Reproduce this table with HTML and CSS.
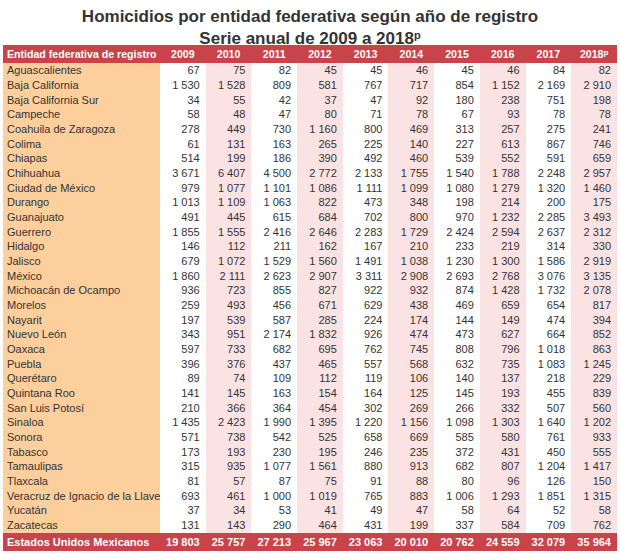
FILE: index.html
```html
<!DOCTYPE html>
<html lang="es">
<head>
    <meta charset="UTF-8">
    <title>Homicidios por entidad federativa</title>
    <link rel="stylesheet" href="styles.css">
</head>
<body>
    <!-- Título -->
    <div class="titulo">
        <div>Homicidios por entidad federativa según año de registro</div>
        <div>Serie anual de 2009 a 2018<sup>p</sup></div>
    </div>

    <!-- Tabla -->
    <table class="tabla">
        <colgroup>
            <col class="c-entidad">
            <col class="c-anio">
            <col class="c-anio alt">
            <col class="c-anio">
            <col class="c-anio alt">
            <col class="c-anio">
            <col class="c-anio alt">
            <col class="c-anio">
            <col class="c-anio alt">
            <col class="c-anio">
            <col class="c-anio alt">
        </colgroup>
        <thead>
            <tr class="encabezado">
                <th>Entidad federativa de registro</th>
                <th>2009</th><th>2010</th><th>2011</th><th>2012</th><th>2013</th>
                <th>2014</th><th>2015</th><th>2016</th><th>2017</th><th>2018<sup>p</sup></th>
            </tr>
        </thead>
        <tbody>
            <tr><td>Aguascalientes</td><td>67</td><td>75</td><td>82</td><td>45</td><td>45</td><td>46</td><td>45</td><td>46</td><td>84</td><td>82</td></tr>
            <tr><td>Baja California</td><td>1 530</td><td>1 528</td><td>809</td><td>581</td><td>767</td><td>717</td><td>854</td><td>1 152</td><td>2 169</td><td>2 910</td></tr>
            <tr><td>Baja California Sur</td><td>34</td><td>55</td><td>42</td><td>37</td><td>47</td><td>92</td><td>180</td><td>238</td><td>751</td><td>198</td></tr>
            <tr><td>Campeche</td><td>58</td><td>48</td><td>47</td><td>80</td><td>71</td><td>78</td><td>67</td><td>93</td><td>78</td><td>78</td></tr>
            <tr><td>Coahuila de Zaragoza</td><td>278</td><td>449</td><td>730</td><td>1 160</td><td>800</td><td>469</td><td>313</td><td>257</td><td>275</td><td>241</td></tr>
            <tr><td>Colima</td><td>61</td><td>131</td><td>163</td><td>265</td><td>225</td><td>140</td><td>227</td><td>613</td><td>867</td><td>746</td></tr>
            <tr><td>Chiapas</td><td>514</td><td>199</td><td>186</td><td>390</td><td>492</td><td>460</td><td>539</td><td>552</td><td>591</td><td>659</td></tr>
            <tr><td>Chihuahua</td><td>3 671</td><td>6 407</td><td>4 500</td><td>2 772</td><td>2 133</td><td>1 755</td><td>1 540</td><td>1 788</td><td>2 248</td><td>2 957</td></tr>
            <tr><td>Ciudad de México</td><td>979</td><td>1 077</td><td>1 101</td><td>1 086</td><td>1 111</td><td>1 099</td><td>1 080</td><td>1 279</td><td>1 320</td><td>1 460</td></tr>
            <tr><td>Durango</td><td>1 013</td><td>1 109</td><td>1 063</td><td>822</td><td>473</td><td>348</td><td>198</td><td>214</td><td>200</td><td>175</td></tr>
            <tr><td>Guanajuato</td><td>491</td><td>445</td><td>615</td><td>684</td><td>702</td><td>800</td><td>970</td><td>1 232</td><td>2 285</td><td>3 493</td></tr>
            <tr><td>Guerrero</td><td>1 855</td><td>1 555</td><td>2 416</td><td>2 646</td><td>2 283</td><td>1 729</td><td>2 424</td><td>2 594</td><td>2 637</td><td>2 312</td></tr>
            <tr><td>Hidalgo</td><td>146</td><td>112</td><td>211</td><td>162</td><td>167</td><td>210</td><td>233</td><td>219</td><td>314</td><td>330</td></tr>
            <tr><td>Jalisco</td><td>679</td><td>1 072</td><td>1 529</td><td>1 560</td><td>1 491</td><td>1 038</td><td>1 230</td><td>1 300</td><td>1 586</td><td>2 919</td></tr>
            <tr><td>México</td><td>1 860</td><td>2 111</td><td>2 623</td><td>2 907</td><td>3 311</td><td>2 908</td><td>2 693</td><td>2 768</td><td>3 076</td><td>3 135</td></tr>
            <tr><td>Michoacán de Ocampo</td><td>936</td><td>723</td><td>855</td><td>827</td><td>922</td><td>932</td><td>874</td><td>1 428</td><td>1 732</td><td>2 078</td></tr>
            <tr><td>Morelos</td><td>259</td><td>493</td><td>456</td><td>671</td><td>629</td><td>438</td><td>469</td><td>659</td><td>654</td><td>817</td></tr>
            <tr><td>Nayarit</td><td>197</td><td>539</td><td>587</td><td>285</td><td>224</td><td>174</td><td>144</td><td>149</td><td>474</td><td>394</td></tr>
            <tr><td>Nuevo León</td><td>343</td><td>951</td><td>2 174</td><td>1 832</td><td>926</td><td>474</td><td>473</td><td>627</td><td>664</td><td>852</td></tr>
            <tr><td>Oaxaca</td><td>597</td><td>733</td><td>682</td><td>695</td><td>762</td><td>745</td><td>808</td><td>796</td><td>1 018</td><td>863</td></tr>
            <tr><td>Puebla</td><td>396</td><td>376</td><td>437</td><td>465</td><td>557</td><td>568</td><td>632</td><td>735</td><td>1 083</td><td>1 245</td></tr>
            <tr><td>Querétaro</td><td>89</td><td>74</td><td>109</td><td>112</td><td>119</td><td>106</td><td>140</td><td>137</td><td>218</td><td>229</td></tr>
            <tr><td>Quintana Roo</td><td>141</td><td>145</td><td>163</td><td>154</td><td>164</td><td>125</td><td>145</td><td>193</td><td>455</td><td>839</td></tr>
            <tr><td>San Luis Potosí</td><td>210</td><td>366</td><td>364</td><td>454</td><td>302</td><td>269</td><td>266</td><td>332</td><td>507</td><td>560</td></tr>
            <tr><td>Sinaloa</td><td>1 435</td><td>2 423</td><td>1 990</td><td>1 395</td><td>1 220</td><td>1 156</td><td>1 098</td><td>1 303</td><td>1 640</td><td>1 202</td></tr>
            <tr><td>Sonora</td><td>571</td><td>738</td><td>542</td><td>525</td><td>658</td><td>669</td><td>585</td><td>580</td><td>761</td><td>933</td></tr>
            <tr><td>Tabasco</td><td>173</td><td>193</td><td>230</td><td>195</td><td>246</td><td>235</td><td>372</td><td>431</td><td>450</td><td>555</td></tr>
            <tr><td>Tamaulipas</td><td>315</td><td>935</td><td>1 077</td><td>1 561</td><td>880</td><td>913</td><td>682</td><td>807</td><td>1 204</td><td>1 417</td></tr>
            <tr><td>Tlaxcala</td><td>81</td><td>57</td><td>87</td><td>75</td><td>91</td><td>88</td><td>80</td><td>96</td><td>126</td><td>150</td></tr>
            <tr><td>Veracruz de Ignacio de la Llave</td><td>693</td><td>461</td><td>1 000</td><td>1 019</td><td>765</td><td>883</td><td>1 006</td><td>1 293</td><td>1 851</td><td>1 315</td></tr>
            <tr><td>Yucatán</td><td>37</td><td>34</td><td>53</td><td>41</td><td>49</td><td>47</td><td>58</td><td>64</td><td>52</td><td>58</td></tr>
            <tr><td>Zacatecas</td><td>131</td><td>143</td><td>290</td><td>464</td><td>431</td><td>199</td><td>337</td><td>584</td><td>709</td><td>762</td></tr>
        </tbody>
        <tfoot>
            <tr class="total">
                <td>Estados Unidos Mexicanos</td>
                <td>19 803</td><td>25 757</td><td>27 213</td><td>25 967</td><td>23 063</td>
                <td>20 010</td><td>20 762</td><td>24 559</td><td>32 079</td><td>35 964</td>
            </tr>
        </tfoot>
    </table>
</body>
</html>
```

FILE: styles.css
```css
/* general */
body {
    margin: 0;
    padding: 0;
    background-color: #fff;
    font-family: "Liberation Sans", Arial, sans-serif;
    color: #333;
}
/* título */
.titulo {
    height: 39px;
    padding-top: 6px;
    text-align: center;
    font-size: 17px;
    font-weight: bold;
    line-height: 22px;
    color: #333;
}
.titulo sup {
    font-size: 11px;
    vertical-align: 5px;
    line-height: 0;
}
/* tabla */
.tabla {
    margin-left: 3px;
    width: 614px;
    border-collapse: collapse;
    table-layout: fixed;
    font-size: 11px;
}
.c-entidad {
    width: 157px;
    background-color: #fccf9d;
}
.c-anio {
    width: 45.7px;
}
.c-anio.alt {
    background-color: #fbe3e4;
}
.tabla td,
.tabla th {
    padding: 0 6px 0 0;
    text-align: right;
    white-space: nowrap;
}
.tabla td:first-child,
.tabla th:first-child {
    text-align: left;
    padding-left: 4px;
}
.tabla tbody td {
    height: 14.68px;
    line-height: 14px;
}
.encabezado th {
    height: 18px;
    background-color: #c9434a;
    color: #fff;
    font-size: 10.6px;
    font-weight: bold;
    text-align: center;
    padding: 0;
}
.encabezado th sup {
    font-size: 8px;
    vertical-align: 3px;
    line-height: 0;
}
.total td {
    height: 18.5px;
    background-color: #c9434a;
    color: #fff;
    font-weight: bold;
}
```
